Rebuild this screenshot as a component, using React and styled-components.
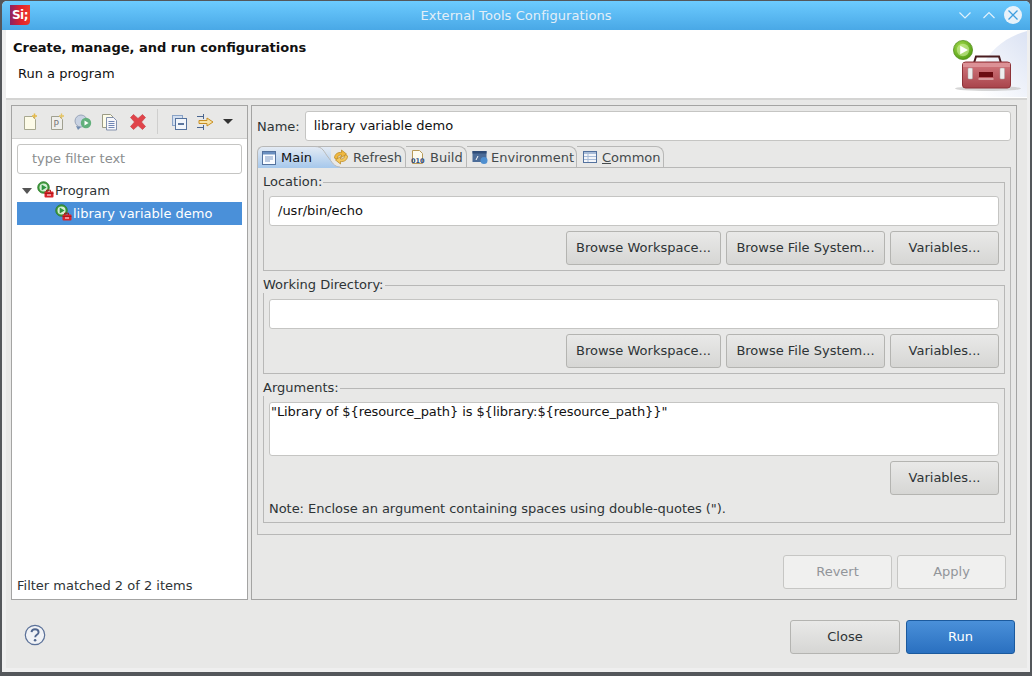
import React from "react";
import styled, { createGlobalStyle } from "styled-components";

const Global = createGlobalStyle`
  html, body { margin: 0; padding: 0; background: #54575b; }
  * { box-sizing: border-box; }
  body { font-family: "DejaVu Sans", sans-serif; font-size: 13px; color: #2e3436; }
`;

const Screen = styled.div`
  width: 1032px; height: 676px; padding: 1px 2px 4px 2px; background: #54575b; overflow: hidden;
`;
const Win = styled.div`
  height: 671px; display: flex; flex-direction: column;
  border-radius: 5px 5px 0 0; overflow: hidden; background: #efefef;
`;
const TitleBar = styled.div`
  height: 29px; flex: none; position: relative; display: flex; align-items: center; justify-content: center;
  background: linear-gradient(#6ccbff, #49a8e6);
  color: #e3eff8; letter-spacing: 0.07px;
`;
const Logo = styled.div`
  position: absolute; left: 8px; top: 4px; width: 20px; height: 20px;
  background: linear-gradient(90deg, #8a2464, #e2232c 55%, #ee3a2a);
  border-radius: 0 0 4px 0; color: #fff; font-weight: 700; font-size: 12px; letter-spacing: -0.5px;
  display: flex; align-items: center; justify-content: center;
`;
const Controls = styled.div`
  position: absolute; right: 8px; top: 5px; display: flex; align-items: center; gap: 6px;
`;
const CtlBtn = styled.svg` display: block; width: 18px; height: 18px; `;
const Body = styled.div`
  flex: 1; display: flex; flex-direction: column; margin: 0 3px 4px 4px; background: #e8e8e7;
`;
const Banner = styled.div`
  height: 70px; flex: none; background: #fff; border-bottom: 2px solid #d4d4d3;
  position: relative; padding: 10px 7px;
`;
const BannerTitle = styled.div` font-weight: 700; color: #111; line-height: 16px; `;
const BannerSub = styled.div` margin: 10px 0 0 5px; color: #111; line-height: 16px; `;
const BannerArt = styled.svg` position: absolute; right: 0; top: 0; width: 80px; height: 67px; `;

const Split = styled.div`
  display: flex; gap: 3px; padding: 5px 10px 0 5px; height: 500px; flex: none;
`;
const LeftPanel = styled.div`
  width: 237px; border: 1px solid #a4a4a3; background: #fff; display: flex; flex-direction: column;
`;
const Toolbar = styled.div`
  height: 33px; flex: none; background: #e8e8e7; border-bottom: 1px solid #cfcfce; position: relative;
`;
const ToolIcon = styled.svg`
  position: absolute; top: 7px; left: ${p => p.$x}px; width: 18px; height: 18px;
`;
const ToolSep = styled.div`
  position: absolute; left: 145px; top: 3px; width: 1px; height: 25px; background: #cfcfce;
`;
const FilterInput = styled.div`
  margin: 5px 5px 0; height: 30px; border: 1px solid #c5c5c3; border-radius: 3px; background: #fff;
  color: #8b8e8f; line-height: 28px; padding-left: 14px;
`;
const Tree = styled.div` margin: 5px 5px 0; flex: 1; `;
const Row = styled.div`
  height: 23px; display: flex; align-items: center; padding-left: ${p => p.$indent}px;
  background: ${p => (p.$selected ? "#4a90d9" : "transparent")};
  color: ${p => (p.$selected ? "#fff" : "#2e3436")};
`;
const Twist = styled.div`
  width: 0; height: 0; border-left: 5px solid transparent; border-right: 5px solid transparent;
  border-top: 6px solid #555; margin: 1px 5px 0 0;
`;
const TreeSvg = styled.svg` width: 18px; height: 18px; flex: none; margin-bottom: 2px; `;
const FilterFoot = styled.div` padding: 0 5px 5px; line-height: 16px; color: #2e3436; `;

const RightPanel = styled.div`
  flex: 1; border: 1px solid #a4a4a3; display: flex; flex-direction: column; padding: 5px 5px 0;
`;
const NameRow = styled.div` display: flex; align-items: center; gap: 5px; height: 30px; flex: none; `;
const Field = styled.div`
  flex: ${p => (p.$grow ? 1 : "none")}; height: 30px; background: #fff; border: 1px solid #c5c5c3; border-radius: 3px;
  color: #111; padding: 0 8px; line-height: 28px; white-space: pre;
`;
const AreaField = styled(Field)`
  height: 54px; padding: 1px 0 0 1px; line-height: 16px; letter-spacing: -0.08px;
`;
const TabFolder = styled.div`
  margin-top: 5px; height: 389px; flex: none; display: flex; flex-direction: column;
`;
const TabBar = styled.div`
  height: 22px; flex: none; display: flex; position: relative; border-bottom: 1px solid #b8b8b7;
`;
const Tab = styled.div`
  width: ${p => p.$w}px; height: 21px; flex: none; display: flex; align-items: center; gap: ${p => p.$gap || 4}px;
  padding-left: ${p => p.$pad}px; border-top: 1px solid #b8b8b7; border-right: 1px solid #b8b8b7;
  border-radius: 0 8px 0 0; color: #444a4c; white-space: nowrap;
`;
const ActiveTab = styled.div`
  width: 74px; height: 22px; flex: none; display: flex; align-items: center; gap: 4px; padding-left: 3px;
  position: relative; color: #111; z-index: 1;
  border-top-left-radius: 6px;
  background: linear-gradient(#e4ebf4, #a6c8ec);
  border-top: 1px solid #b8b8b7; border-left: 1px solid #b8b8b7;
`;
const TabCurve = styled.svg` position: absolute; left: 49px; top: -1px; width: 33px; height: 22px; `;
const TabIcon = styled.svg` width: 16px; height: 16px; flex: none; position: relative; z-index: 1; `;
const RefreshIcon = styled(TabIcon)` z-index: 2; `;
const TabLabel = styled.span` position: relative; z-index: 1; `;
const Under = styled.span` text-decoration: underline; `;
const TabBody = styled.div`
  flex: 1; border: 1px solid #b8b8b7; border-top: 0; padding: 6px 5px 0; display: flex; flex-direction: column; gap: 6px;
`;
const Group = styled.fieldset`
  margin: 0; padding: 6px 5px 5px; border: 1px solid #b8b8b7; min-width: 0; height: ${p => p.$h}px;
  display: flex; flex-direction: column; gap: 5px;
`;
const Legend = styled.legend`
  padding: 0 1px 0 0; line-height: 16px; color: #2e3436; margin-left: -6px;
`;
const BtnRow = styled.div` display: flex; justify-content: flex-end; gap: 5px; `;
const Btn = styled.div`
  width: ${p => p.$w}px; height: 34px; display: flex; align-items: center; justify-content: center;
  border: 1px solid #b4b4b1; border-radius: 3px; background: linear-gradient(#e9e9e8, #d6d6d4);
  color: #2e3436; padding-bottom: 2px;
`;
const FlatBtn = styled(Btn)`
  background: #f0f0ef; color: #92959a; border-color: #c6c6c4;
`;
const PrimaryBtn = styled(Btn)`
  background: linear-gradient(#4a90d9, #2a70c0); color: #fff; border-color: #1b5a9e;
`;
const Note = styled.div` line-height: 16px; margin-top: 1px; color: #2e3436; letter-spacing: -0.045px; `;
const ApplyRow = styled(BtnRow)` margin-top: 20px; padding-right: 5px; `;
const Footer = styled.div`
  flex: 1; display: flex; align-items: flex-start; justify-content: space-between; padding: 20px 12px 0 18px;
`;
const Help = styled.svg` width: 22px; height: 22px; margin-top: 4px; `;
const FootBtns = styled.div` display: flex; gap: 6px; `;

const TreeIcon = () => (
  <TreeSvg viewBox="0 0 18 18">
    <circle cx="6.5" cy="6.5" r="5.8" fill="#3d9a3a" stroke="#2c7a2a" strokeWidth=".8" />
    <circle cx="6.5" cy="6.5" r="4" fill="#d5efd5" />
    <path d="M4.7 3.6 9.6 6.5 4.7 9.4Z" fill="#2f9440" />
    <path d="M9.5 11v-1.8h4V11" fill="none" stroke="#a01414" strokeWidth="1" />
    <rect x="7.5" y="10.5" width="9" height="6" rx="1" fill="#d9232a" />
    <path d="M7.5 12.5h9" stroke="#8f1010" strokeWidth=".6" />
    <path d="M10 14h4" stroke="#fff" strokeWidth="1" />
  </TreeSvg>
);

export default function App() {
  return (
    <>
      <Global />
      <Screen>
        <Win>
          <TitleBar>
            <Logo>Si;</Logo>
            External Tools Configurations
            <Controls>
              <CtlBtn viewBox="0 0 18 18"><path d="M3.5 6.5 9 12l5.5-5.5" fill="none" stroke="#dff1fc" strokeWidth="1.2" /></CtlBtn>
              <CtlBtn viewBox="0 0 18 18"><path d="M3.5 12 9 6.5l5.5 5.5" fill="none" stroke="#dff1fc" strokeWidth="1.2" /></CtlBtn>
              <CtlBtn viewBox="0 0 18 18">
                <circle cx="9" cy="9" r="9" fill="#e7f2fa" />
                <path d="M4.5 4.5l9 9M13.5 4.5l-9 9" stroke="#3f9fe0" strokeWidth="1.3" />
              </CtlBtn>
            </Controls>
          </TitleBar>
          <Body>
            <Banner>
              <BannerTitle>Create, manage, and run configurations</BannerTitle>
              <BannerSub>Run a program</BannerSub>
              <BannerArt viewBox="0 0 80 67">
                <defs>
                  <linearGradient id="sw" x1="0.2" y1="0.8" x2="1" y2="0.1">
                    <stop offset="0" stopColor="#fff" />
                    <stop offset="1" stopColor="#dde4f4" />
                  </linearGradient>
                  <linearGradient id="box" x1="0" y1="0" x2="0" y2="1">
                    <stop offset="0" stopColor="#d47a80" />
                    <stop offset="1" stopColor="#a8444b" />
                  </linearGradient>
                  <radialGradient id="ball" cx=".4" cy=".35" r=".7">
                    <stop offset="0" stopColor="#a8de4e" />
                    <stop offset="1" stopColor="#4f9a12" />
                  </radialGradient>
                </defs>
                <path d="M80 1C60 6 42 20 36 36 30 52 20 62 8 67H80Z" fill="url(#sw)" />
                <ellipse cx="41" cy="58.5" rx="33" ry="2.5" fill="#c4c4c4" opacity=".7" />
                <path d="M27 33l2-6.5h23l2 6.5" fill="none" stroke="#4a1c20" strokeWidth="2" />
                <rect x="15.5" y="32" width="48" height="26" rx="3" fill="url(#box)" stroke="#8d3338" />
                <rect x="16" y="33" width="47" height="4" fill="#dc9196" />
                <rect x="21" y="38" width="4.5" height="11" rx="1" fill="#eee" stroke="#aaa" strokeWidth=".5" />
                <rect x="53" y="38" width="4.5" height="11" rx="1" fill="#eee" stroke="#aaa" strokeWidth=".5" />
                <rect x="32" y="42" width="14" height="5" fill="#6b0c12" />
                <path d="M31.5 49h15" stroke="#f5dede" strokeWidth="1.2" />
                <circle cx="16" cy="20" r="9.6" fill="url(#ball)" stroke="#4f8a18" strokeWidth=".7" />
                <circle cx="16" cy="20" r="6.2" fill="#c8eb96" opacity=".65" />
                <path d="M13.2 15.8 21 20l-7.8 4.2Z" fill="#fff" />
              </BannerArt>
            </Banner>
            <Split>
              <LeftPanel>
                <Toolbar>
                  <ToolIcon $x={9} viewBox="0 0 18 18">
                    <path d="M3.5 3.5h8l3 3v10h-11Z" fill="#fdfbe8" stroke="#a8a890" />
                    <path d="M13.5 0.5v5M11 3h5" stroke="#e4b94a" strokeWidth="1.6" />
                  </ToolIcon>
                  <ToolIcon $x={36} viewBox="0 0 18 18">
                    <path d="M3.5 3.5h8l3 3v10h-11Z" fill="#eeeeea" stroke="#a0a090" />
                    <text x="5.4" y="14.3" fontSize="9" fontFamily="DejaVu Sans" fill="#777">P</text>
                    <path d="M13.5 0.5v5M11 3h5" stroke="#e4c464" strokeWidth="1.4" />
                  </ToolIcon>
                  <ToolIcon $x={62} viewBox="0 0 18 18">
                    <circle cx="7" cy="8" r="6" fill="#c8d2e2" stroke="#9aa6ba" />
                    <path d="M2 13l2 4 3-3" fill="#6f8bb0" />
                    <circle cx="12" cy="10" r="5.2" fill="#62b07c" />
                    <path d="M10.5 7.6 14.6 10l-4.1 2.4Z" fill="#fff" />
                  </ToolIcon>
                  <ToolIcon $x={89} viewBox="0 0 18 18">
                    <path d="M1.5 1.5h8l3 3v10h-11Z" fill="#fdfbe8" stroke="#9b9b85" />
                    <path d="M5.5 4.5h7l3 3v9.5h-10Z" fill="#f7f7fb" stroke="#8391ad" />
                    <path d="M7.5 8.5h6M7.5 10.5h6M7.5 12.5h6M7.5 14.5h6" stroke="#7086b4" />
                  </ToolIcon>
                  <ToolIcon $x={117} viewBox="0 0 18 18">
                    <path d="M1.5 4.5 4.5 1.5 9 5.5l4.5-4 3 3L12.5 9l4 4.5-3 3L9 12.5l-4.5 4-3-3L5.5 9Z" fill="#e0444a" stroke="#c73a40" strokeWidth=".6" />
                  </ToolIcon>
                  <ToolSep />
                  <ToolIcon $x={158} viewBox="0 0 18 18">
                    <rect x="2.5" y="2.5" width="10" height="10" fill="#d3dff0" stroke="#8aa3c6" />
                    <rect x="5.5" y="5.5" width="11" height="11" fill="#f2f6fb" stroke="#54729e" />
                    <path d="M8 11h6" stroke="#2b4c80" strokeWidth="1.4" />
                  </ToolIcon>
                  <ToolIcon $x={184} viewBox="0 0 18 18">
                    <path d="M1 3.5h6M1 14.5h6" stroke="#49658f" strokeWidth="1" />
                    <path d="M7.5 1v5M7.5 12v5" stroke="#49658f" />
                    <path d="M3 7.5h8V5l6 4-6 4v-2.5H3Z" fill="#f8e3a6" stroke="#c98f22" />
                  </ToolIcon>
                  <ToolIcon $x={207} viewBox="0 0 18 18">
                    <path d="M4 6h10l-5 5Z" fill="#333" />
                  </ToolIcon>
                </Toolbar>
                <FilterInput>type filter text</FilterInput>
                <Tree>
                  <Row $indent={5}><Twist /><TreeIcon />Program</Row>
                  <Row $indent={38} $selected><TreeIcon />library variable demo</Row>
                </Tree>
                <FilterFoot>Filter matched 2 of 2 items</FilterFoot>
              </LeftPanel>
              <RightPanel>
                <NameRow>
                  Name:
                  <Field $grow>library variable demo</Field>
                </NameRow>
                <TabFolder>
                  <TabBar>
                    <ActiveTab>
                      <TabIcon viewBox="0 0 16 16">
                        <rect x="1.5" y="1.5" width="13" height="13" fill="#fafcff" stroke="#54729e" />
                        <path d="M2 2h12v2.5H2Z" fill="#6a8fc0" />
                        <path d="M4 7h8M4 9h8M4 11h5" stroke="#7d99c4" />
                      </TabIcon>
                      <TabLabel>Main</TabLabel>
                      <TabCurve viewBox="0 0 33 22">
                        <defs>
                          <linearGradient id="tabfade" x1="0" y1="0" x2="0" y2="1">
                            <stop offset="0" stopColor="#e4ebf4" />
                            <stop offset="1" stopColor="#a6c8ec" />
                          </linearGradient>
                        </defs>
                        <path d="M0 0.5H8C16 .5 17 6 21 11s6 10 12 10V22H0Z" fill="url(#tabfade)" />
                        <path d="M0 0.5H8C16 .5 17 6 21 11s6 10 12 10" fill="none" stroke="#b8b8b7" />
                      </TabCurve>
                    </ActiveTab>
                    <Tab $w={75} $pad={2} $gap={4}>
                      <RefreshIcon viewBox="0 0 16 16">
                        <path d="M1.5 9C1.5 5 5 3 8.5 3.5V1l5 4-5 3.5V6C6 5.8 4.5 7 4.5 9.5c-1 .6-2.6.6-3-.5Z" fill="#f0b840" stroke="#b88418" strokeWidth=".7" />
                        <path d="M14.5 7C14.5 11 11 13 7.5 12.5V15l-5-4 5-3.5V10c2.5.2 4-1 4-3.5 1-.6 2.6-.6 3 .5Z" fill="#f4c860" stroke="#b88418" strokeWidth=".7" />
                      </RefreshIcon>
                      <TabLabel>Refresh</TabLabel>
                    </Tab>
                    <Tab $w={61} $pad={4} $gap={4}>
                      <TabIcon viewBox="0 0 16 16">
                        <path d="M2.5 1.5h7l3 3v10h-10Z" fill="#fdfbef" stroke="#b89a58" />
                        <text x="1" y="13.6" fontSize="6.5" fontWeight="700" fontFamily="DejaVu Sans" fill="#2b4c80">010</text>
                      </TabIcon>
                      <TabLabel>Build</TabLabel>
                    </Tab>
                    <Tab $w={110} $pad={5} $gap={3}>
                      <TabIcon viewBox="0 0 16 16">
                        <rect x="0.5" y="2" width="14" height="11" fill="#4c6c98" />
                        <rect x="0.5" y="2" width="14" height="2.5" fill="#2f4c78" />
                        <path d="M4 11l2-4" stroke="#fff" strokeWidth="1" />
                        <circle cx="12" cy="11.5" r="3.5" fill="#4f8fd0" />
                      </TabIcon>
                      <TabLabel>Environment</TabLabel>
                    </Tab>
                    <Tab $w={87} $pad={5} $gap={4}>
                      <TabIcon viewBox="0 0 16 16">
                        <rect x="1.5" y="2.5" width="13" height="11" fill="#f4f6fa" stroke="#54729e" />
                        <path d="M2 3h12v2H2Z" fill="#a8bcd8" />
                        <path d="M2 7.5h12M2 10.5h12M6 5v8" stroke="#a8bcd8" />
                      </TabIcon>
                      <TabLabel><Under>C</Under>ommon</TabLabel>
                    </Tab>
                  </TabBar>
                  <TabBody>
                    <Group $h={97}>
                      <Legend>Location:</Legend>
                      <Field>/usr/bin/echo</Field>
                      <BtnRow>
                        <Btn $w={155}>Browse Workspace...</Btn>
                        <Btn $w={159}>Browse File System...</Btn>
                        <Btn $w={109}>Variables...</Btn>
                      </BtnRow>
                    </Group>
                    <Group $h={97}>
                      <Legend>Working Directory:</Legend>
                      <Field />
                      <BtnRow>
                        <Btn $w={155}>Browse Workspace...</Btn>
                        <Btn $w={159}>Browse File System...</Btn>
                        <Btn $w={109}>Variables...</Btn>
                      </BtnRow>
                    </Group>
                    <Group $h={143}>
                      <Legend>Arguments:</Legend>
                      <AreaField>{'"Library of ${resource_path} is ${library:${resource_path}}"'}</AreaField>
                      <BtnRow><Btn $w={109}>Variables...</Btn></BtnRow>
                      <Note>Note: Enclose an argument containing spaces using double-quotes (").</Note>
                    </Group>
                  </TabBody>
                </TabFolder>
                <ApplyRow>
                  <FlatBtn $w={109}>Revert</FlatBtn>
                  <FlatBtn $w={109}>Apply</FlatBtn>
                </ApplyRow>
              </RightPanel>
            </Split>
            <Footer>
              <Help viewBox="0 0 22 22">
                <circle cx="11" cy="11" r="9.7" fill="#f0f2f6" stroke="#5a7098" strokeWidth="1.2" />
                <path d="M7.5 8.2C7.7 6 9.3 5.2 11 5.2c2 0 3.6 1.1 3.6 3 0 2.7-3.4 2.5-3.4 5" fill="none" stroke="#50668e" strokeWidth="1.9" />
                <circle cx="11.1" cy="16.2" r="1.3" fill="#50668e" />
              </Help>
              <FootBtns>
                <Btn $w={110}>Close</Btn>
                <PrimaryBtn $w={109}>Run</PrimaryBtn>
              </FootBtns>
            </Footer>
          </Body>
        </Win>
      </Screen>
    </>
  );
}
